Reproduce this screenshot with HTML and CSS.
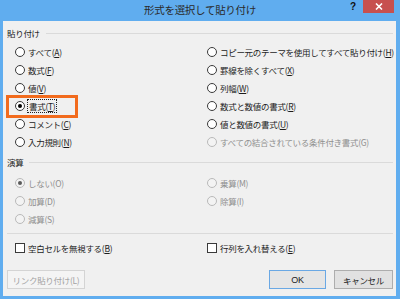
FILE: index.html
```html
<!DOCTYPE html>
<html lang="ja">
<head>
<meta charset="utf-8">
<link rel="stylesheet" href="styles.css">
</head>
<body>
<div class="window">
  <div class="titlebar">
    <span></span>
    <span class="title">形式を選択して貼り付け</span>
    <div class="controls">
      <span class="help">?</span>
      <span class="close"><svg width="8" height="7" viewBox="0 0 8 7"><path d="M1 0.5 L7 6.5 M7 0.5 L1 6.5" stroke="#fff" stroke-width="1.6" fill="none"/></svg></span>
    </div>
  </div>
  <div class="client">
    <div class="group-head"><span>貼り付け</span><i class="rule"></i></div>
    <div class="opts paste">
      <label class="opt"><span class="radio"></span><span>すべて(<u>A</u>)</span></label>
      <label class="opt"><span class="radio"></span><span>コピー元のテーマを使用してすべて貼り付け(<u>H</u>)</span></label>
      <label class="opt"><span class="radio"></span><span>数式(<u>F</u>)</span></label>
      <label class="opt"><span class="radio"></span><span>罫線を除くすべて(<u>X</u>)</span></label>
      <label class="opt"><span class="radio"></span><span>値(<u>V</u>)</span></label>
      <label class="opt"><span class="radio"></span><span>列幅(<u>W</u>)</span></label>
      <label class="opt hl"><span class="radio on"></span><span class="focus">書式(<u>T</u>)</span></label>
      <label class="opt"><span class="radio"></span><span>数式と数値の書式(<u>R</u>)</span></label>
      <label class="opt"><span class="radio"></span><span>コメント(<u>C</u>)</span></label>
      <label class="opt"><span class="radio"></span><span>値と数値の書式(<u>U</u>)</span></label>
      <label class="opt"><span class="radio"></span><span>入力規則(<u>N</u>)</span></label>
      <label class="opt off"><span class="radio"></span><span>すべての結合されている条件付き書式(G)</span></label>
    </div>
    <div class="group-head second"><span>演算</span><i class="rule"></i></div>
    <div class="opts calc">
      <label class="opt off"><span class="radio on"></span><span>しない(O)</span></label>
      <label class="opt off"><span class="radio"></span><span>乗算(M)</span></label>
      <label class="opt off"><span class="radio"></span><span>加算(D)</span></label>
      <label class="opt off"><span class="radio"></span><span>除算(I)</span></label>
      <label class="opt off"><span class="radio"></span><span>減算(S)</span></label>
    </div>
    <div class="sep"></div>
    <div class="opts checks">
      <label class="opt"><span class="check"></span><span>空白セルを無視する(<u>B</u>)</span></label>
      <label class="opt"><span class="check"></span><span>行列を入れ替える(<u>E</u>)</span></label>
    </div>
    <div class="buttons">
      <button class="btn link" disabled>リンク貼り付け(L)</button>
      <button class="btn ok">OK</button>
      <button class="btn cancel">キャンセル</button>
    </div>
  </div>
</div>
</body>
</html>
```
FILE: styles.css
```css
html, body {
  margin: 0;
  padding: 0;
}
body {
  width: 400px;
  height: 299px;
  overflow: hidden;
  background: #60adef;
  font-family: "Noto Sans CJK JP", "Noto Sans", sans-serif;
  color: #1c1c1c;
}
.window {
  width: 400px;
  height: 299px;
}
.titlebar {
  height: 21px;
  display: grid;
  grid-template-columns: 1fr auto 1fr;
  align-items: start;
}
.title {
  font-size: 10.5px;
  letter-spacing: -0.3px;
  line-height: 19px;
  color: #2a2a2a;
}
.controls {
  justify-self: end;
  display: flex;
  align-items: flex-start;
  margin-right: 6px;
}
.help {
  font: bold 10px "Liberation Sans", sans-serif;
  line-height: 13px;
  color: #111;
  margin-right: 7px;
}
.close {
  width: 31px;
  height: 13px;
  background: #c7504f;
  display: flex;
  align-items: center;
  justify-content: center;
}
.client {
  margin: 0 4px 0 3px;
  height: 275px;
  box-sizing: border-box;
  background: #f0f0f0;
  padding-top: 6px;
  font-size: 8.5px;
  letter-spacing: -0.3px;
}
.group-head {
  display: flex;
  align-items: center;
  height: 12px;
  padding: 0 3px 0 4px;
  gap: 6px;
}
.group-head.second {
  margin-top: 5px;
}
.rule {
  flex: 1;
  height: 1px;
  background: #dadada;
}
.opts {
  display: grid;
  grid-template-columns: 192px 1fr;
  grid-auto-rows: 18px;
  padding-left: 12px;
}
.paste {
  margin-top: 4px;
}
.calc {
  margin-top: 6px;
}
.checks {
  margin-top: 5px;
}
.opt {
  display: flex;
  align-items: center;
  gap: 3px;
  white-space: nowrap;
}
.opt u {
  text-decoration-thickness: 1px;
  text-underline-offset: 1px;
}
.radio {
  flex: none;
  width: 10px;
  height: 10px;
  box-sizing: border-box;
  border: 1px solid #3a3a3a;
  border-radius: 50%;
  background: #fff;
  display: flex;
  align-items: center;
  justify-content: center;
}
.radio.on::after {
  content: "";
  width: 4px;
  height: 4px;
  border-radius: 50%;
  background: #000;
}
.off {
  color: #8f8f8f;
}
.off .radio {
  border-color: #b9b9b9;
  background: #f3f3f3;
}
.off .radio.on::after {
  background: #5a5a5a;
}
.hl {
  position: relative;
}
.hl::before {
  content: "";
  position: absolute;
  left: -9px;
  top: -2px;
  width: 72px;
  height: 23px;
  box-sizing: border-box;
  border: 3px solid #f26b1d;
}
.focus {
  outline: 1px dotted #222;
  outline-offset: 0;
  padding: 0 1px;
  line-height: 12px;
}
.check {
  flex: none;
  width: 10px;
  height: 10px;
  box-sizing: border-box;
  border: 1px solid #3a3a3a;
  background: #fff;
}
.sep {
  height: 1px;
  background: #dadada;
  margin: 5px 3px 0 4px;
}
.buttons {
  display: flex;
  margin-top: 13px;
  padding: 0 3px 0 4px;
  gap: 8px;
}
.btn {
  height: 19px;
  box-sizing: border-box;
  font-family: "Noto Sans CJK JP", "Noto Sans", sans-serif;
  font-size: 8.5px;
  letter-spacing: -0.3px;
  padding: 0;
  color: #1c1c1c;
  background: #e1e1e1;
  border: 1px solid #adadad;
  border-radius: 0;
}
.btn.link {
  width: 78px;
  color: #a3a3a3;
  background: #f4f4f4;
  border-color: #d4d4d4;
}
.btn.ok {
  width: 57px;
  margin-left: auto;
  background: #e5e5e5;
  border-color: #6aa8e4;
  font-family: "Liberation Sans", sans-serif;
  font-size: 9px;
}
.btn.cancel {
  width: 59px;
}
```
